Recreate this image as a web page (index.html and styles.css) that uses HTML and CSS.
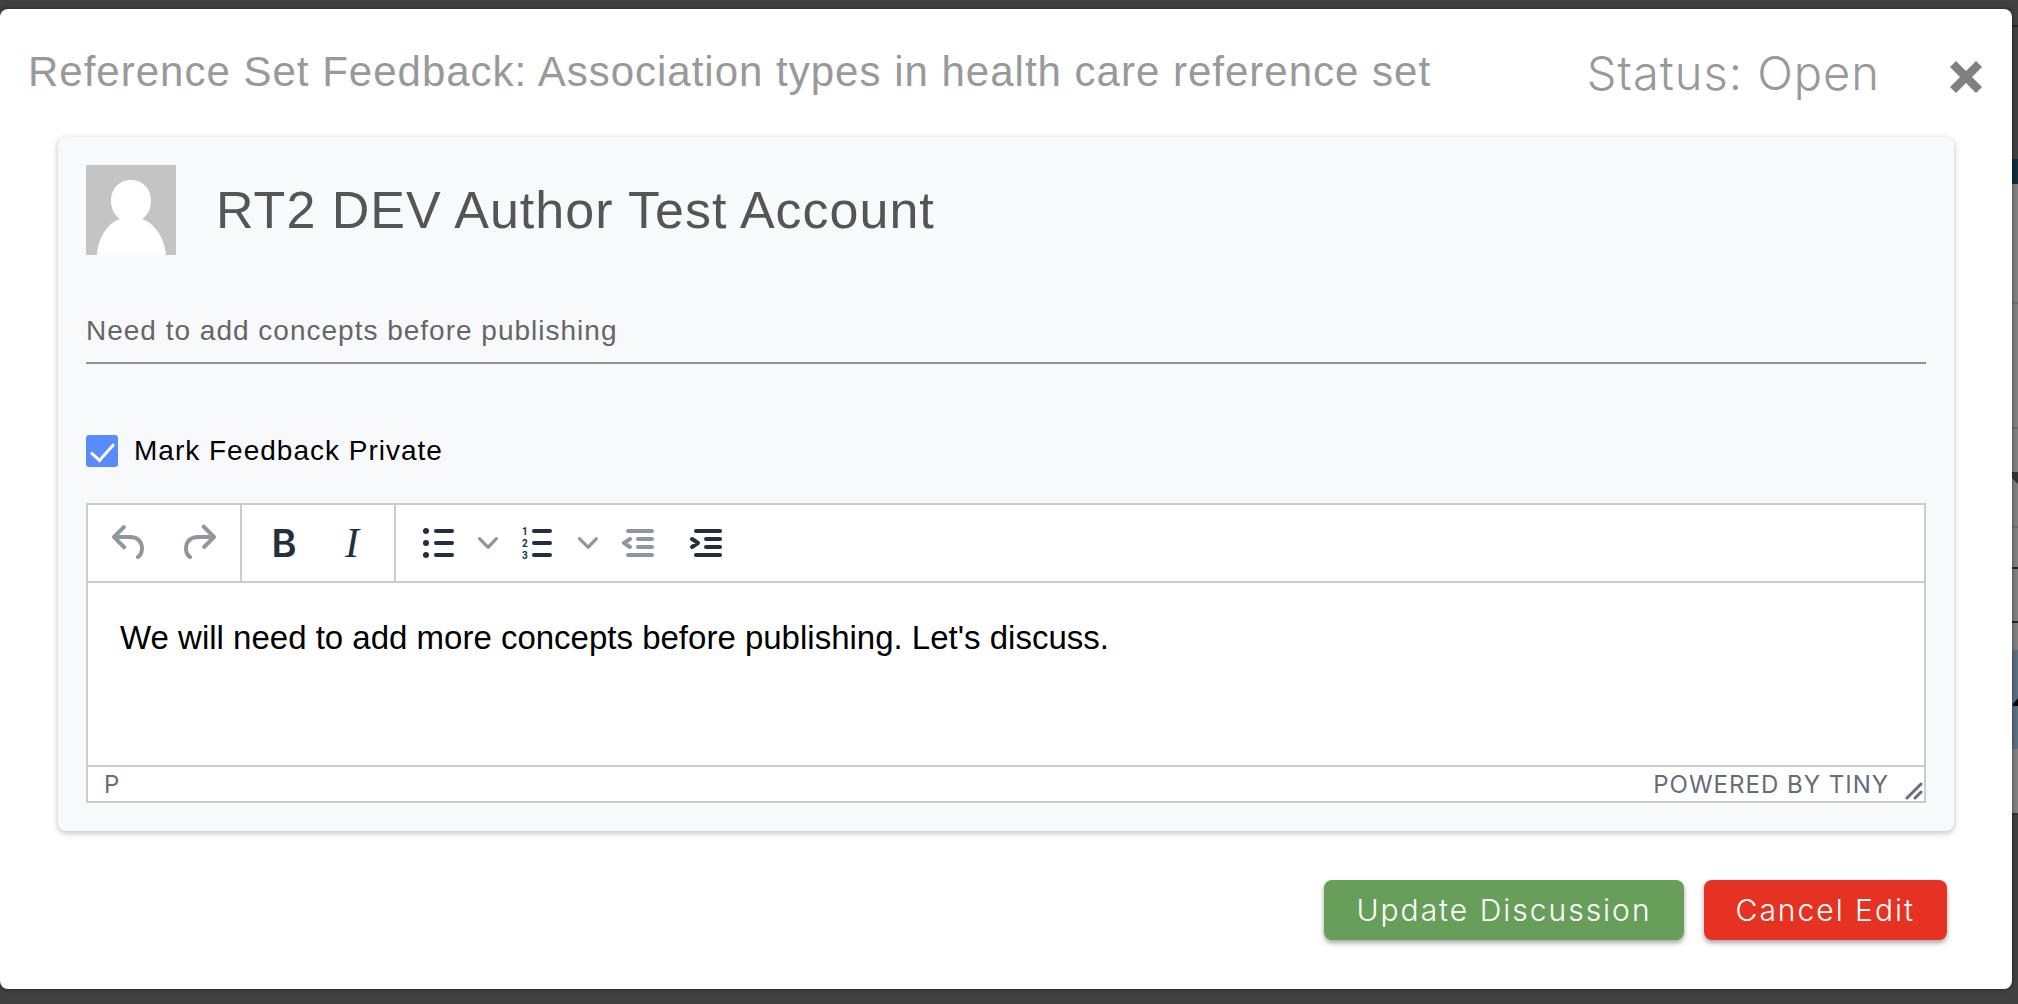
FILE: index.html
```html
<!DOCTYPE html>
<html lang="en">
<head>
  <meta charset="utf-8">
  <title>Reference Set Feedback</title>
  <link rel="stylesheet" href="styles.css">
</head>
<body>

  <!-- dimmed page behind the dialog -->
  <div class="page" aria-hidden="true">
    <div class="page-top"></div>
    <div class="page-nav"></div>
    <div class="page-bar"></div>
    <div class="page-row row-a"></div>
    <div class="page-row row-b"></div>
    <div class="page-row row-c"></div>
    <div class="page-row row-d">
      <svg width="8" height="12" viewBox="0 0 8 12"><path d="M0 0H8V12L2 6H0Z"/></svg>
    </div>
    <div class="page-row row-e"></div>
    <div class="page-row row-f"></div>
    <div class="page-selected">
      <svg width="5" height="8" viewBox="0 0 5 8"><path d="M5 0V8H0V6Z"/></svg>
    </div>
    <div class="page-row row-g"></div>
  </div>

  <div class="modal" role="dialog" aria-labelledby="modal-title">
    <div class="modal-header">
      <h1 class="modal-title" id="modal-title">Reference Set Feedback: Association types in health care reference set</h1>
      <div class="modal-status">Status: Open</div>
      <button class="btn-close" type="button" aria-label="Close">
        <svg width="32" height="32" viewBox="0 0 32 32"><path d="M6 0L16 10L26 0L32 6L22 16L32 26L26 32L16 22L6 32L0 26L10 16L0 6Z"/></svg>
      </button>
    </div>

    <form class="card">
      <div class="author">
        <svg class="avatar" width="90" height="90" viewBox="0 0 90 90">
          <rect width="90" height="90" fill="#c4c4c4"/>
          <path d="M45 15C57 15 65 24 65 36C65 44 61 51 56 54C69 58 79 74 80 90H11C12 74 21 58 34 54C29 51 25 44 25 36C25 24 33 15 45 15Z" fill="#fff"/>
        </svg>
        <h2 class="author-name">RT2 DEV Author Test Account</h2>
      </div>

      <input class="subject" type="text" aria-label="Subject" value="Need to add concepts before publishing">

      <label class="private"><input type="checkbox" checked>Mark Feedback Private</label>

      <div class="editor">
        <div class="toolbar">
          <div class="group">
            <button class="tool" type="button" aria-label="Undo" disabled>
              <svg viewBox="0 0 24 24"><path d="M6.4 8H12c3.7 0 6.2 2 6.8 5.1.6 2.7-.4 5.6-2.3 6.8a1 1 0 0 1-1-1.8c1.1-.6 1.8-2.7 1.4-4.6-.5-2.1-2.1-3.5-4.9-3.5H6.4l3.3 3.3a1 1 0 1 1-1.4 1.4l-5-5a1 1 0 0 1 0-1.4l5-5a1 1 0 0 1 1.4 1.4L6.4 8z"/></svg>
            </button>
            <button class="tool" type="button" aria-label="Redo" disabled>
              <svg viewBox="0 0 24 24"><path d="M17.6 10H12c-2.8 0-4.4 1.4-4.9 3.5-.4 2 .3 4 1.4 4.6a1 1 0 1 1-1 1.8c-2-1.2-2.9-4.1-2.3-6.8.6-3 3-5.1 6.8-5.1h5.6l-3.3-3.3a1 1 0 1 1 1.4-1.4l5 5a1 1 0 0 1 0 1.4l-5 5a1 1 0 0 1-1.4-1.4l3.3-3.3z"/></svg>
            </button>
          </div>
          <div class="group">
            <button class="tool bold" type="button" aria-label="Bold">B</button>
            <button class="tool italic" type="button" aria-label="Italic">I</button>
          </div>
          <div class="group">
            <button class="tool" type="button" aria-label="Bullet list">
              <svg viewBox="0 0 24 24"><circle cx="6" cy="6" r="1.5"/><circle cx="6" cy="12" r="1.5"/><circle cx="6" cy="18" r="1.5"/><path class="line" d="M11 6h8M11 12h8M11 18h8"/></svg>
            </button>
            <button class="tool chevron" type="button" aria-label="Bullet list styles">
              <svg viewBox="0 0 10 10"><path d="M8.7 2.2c.3-.3.8-.3 1 0 .4.4.4.9 0 1.2L5.7 7.8c-.3.3-.9.3-1.2 0L.2 3.4a.8.8 0 0 1 0-1.2c.3-.3.8-.3 1.1 0L5 6l3.7-3.8z"/></svg>
            </button>
            <button class="tool" type="button" aria-label="Numbered list">
              <svg viewBox="0 0 24 24"><text x="4" y="8">1</text><text x="4" y="14">2</text><text x="4" y="20">3</text><path class="line" d="M10 6h8M10 12h8M10 18h8"/></svg>
            </button>
            <button class="tool chevron" type="button" aria-label="Numbered list styles">
              <svg viewBox="0 0 10 10"><path d="M8.7 2.2c.3-.3.8-.3 1 0 .4.4.4.9 0 1.2L5.7 7.8c-.3.3-.9.3-1.2 0L.2 3.4a.8.8 0 0 1 0-1.2c.3-.3.8-.3 1.1 0L5 6l3.7-3.8z"/></svg>
            </button>
            <button class="tool" type="button" aria-label="Decrease indent" disabled>
              <svg viewBox="0 0 24 24"><path class="line" d="M7 6h12M12 10h7M12 14h7M7 18h12M8 10L5 12L8 14"/></svg>
            </button>
            <button class="tool" type="button" aria-label="Increase indent">
              <svg viewBox="0 0 24 24"><path class="line" d="M7 6h12M12 10h7M12 14h7M7 18h12M5 10L8 12L5 14"/></svg>
            </button>
          </div>
        </div>
        <textarea class="editor-text" aria-label="Message">We will need to add more concepts before publishing. Let's discuss.</textarea>
        <div class="statusbar">
          <span>P</span>
          <a class="powered" href="#">POWERED BY TINY</a>
          <svg class="resize" width="18" height="18" viewBox="0 0 18 18"><path d="M2 16L16 2M10 16L16 10"/></svg>
        </div>
      </div>
    </form>

    <div class="modal-footer">
      <button class="btn btn-update" type="button">Update Discussion</button>
      <button class="btn btn-cancel" type="button">Cancel Edit</button>
    </div>
  </div>

</body>
</html>
```
FILE: styles.css
```css
* {
  box-sizing: border-box;
}
body {
  display: grid;
  margin: 0;
  min-height: 100vh;
  background-color: #404040;
  font-family: "Liberation Sans", Arial, sans-serif;
  letter-spacing: 1px;
}
button {
  border: 0;
  padding: 0;
  background: none;
}

/* page behind */
.page,
.modal {
  grid-area: 1 / 1;
}
.page svg {
  display: block;
  margin-left: auto;
}
.page-top {
  height: 27px;
  border-bottom: 2px solid #262626;
}
.page-nav {
  height: 132px;
}
.page-bar {
  height: 25px;
  background-color: #132d3b;
}
.page-row {
  background-color: #808080;
  border-bottom: 2px solid #6e6e6e;
}
.row-a { height: 120px; }
.row-b { height: 125px; }
.row-c {
  height: 43px;
  border-bottom: 0;
}
.row-d {
  height: 56px;
  fill: #333;
}
.row-e {
  height: 41px;
  border-color: #262626;
}
.row-f {
  height: 54px;
  border-color: #262626;
}
.page-selected {
  height: 126px;
  border-top: 27px solid #808080;
  padding-top: 48px;
  background-color: #5a6f80;
}
.row-g {
  height: 66px;
  border-color: #333;
}

/* dialog */
.modal {
  margin: 9px 6px 15px 0;
  border-radius: 8px;
  background-color: #fff;
  box-shadow: 0 0 4px rgba(0, 0, 0, 0.5);
}
.modal-header {
  display: flex;
  align-items: center;
  height: 128px;
  padding: 0 30px 2px 28px;
  color: #999;
}
.modal-title {
  flex: 1;
  margin: 0;
  font-size: 42px;
  font-weight: normal;
}
.modal-status {
  margin-right: 70px;
  font-family: Inter, sans-serif;
  font-size: 47px;
  font-weight: 300;
}
.btn-close {
  padding-top: 10px;
}
.btn-close svg {
  display: block;
  fill: #808080;
}
.card {
  margin: 0 58px;
  padding: 28px;
  border-radius: 8px;
  background-color: #f8f9fb;
  box-shadow: 0 2px 6px rgba(0, 0, 0, 0.25);
}
.author {
  display: flex;
  align-items: center;
  gap: 40px;
}
.author-name {
  margin: 0;
  color: #555;
  font-size: 52px;
  font-weight: normal;
}
.subject {
  display: block;
  width: 100%;
  height: 68px;
  margin: 41px 0 71px;
  border: 0;
  border-bottom: 2px solid #909297;
  padding: 4px 0 0;
  background: none;
  color: #666;
  font-family: inherit;
  font-size: 28px;
  letter-spacing: inherit;
}
.private {
  display: flex;
  align-items: center;
  gap: 16px;
  height: 32px;
  font-size: 28px;
}
.private input {
  appearance: none;
  width: 32px;
  height: 32px;
  margin: 0;
  border-radius: 3px;
  background-color: #5a8bfa;
}
.private input:checked::before {
  content: "";
  display: block;
  width: 10px;
  height: 20px;
  margin: 3px 0 0 10px;
  border: solid #fff;
  border-width: 0 3px 3px 0;
  transform: rotate(42deg);
}

/* editor */
.editor {
  margin-top: 36px;
  border: 2px solid #ccc;
  background-color: #fff;
}
.toolbar {
  display: flex;
  height: 78px;
  border-bottom: 2px solid #ccc;
}
.group {
  display: flex;
  align-items: center;
  padding: 0 8px;
  border-right: 2px solid #ccc;
}
.group:last-child {
  border-right: 0;
}
.tool {
  display: flex;
  align-items: center;
  justify-content: center;
  width: 68px;
  height: 68px;
  color: #222f3e;
}
.tool svg {
  width: 48px;
  height: 48px;
  fill: currentColor;
}
.tool .line {
  fill: none;
  stroke: currentColor;
  stroke-width: 2;
  stroke-linecap: round;
  stroke-linejoin: round;
}
.tool text {
  font: bold 5px Roboto, sans-serif;
  letter-spacing: 0;
}
.tool:disabled svg,
.chevron svg {
  opacity: 0.5;
}
.chevron {
  width: 32px;
}
.chevron svg {
  width: 20px;
  height: 20px;
}
.bold {
  font: 600 38px Inter, sans-serif;
}
.italic {
  font: italic 42px "Liberation Serif", serif;
}
.editor-text {
  display: block;
  width: 100%;
  height: 182px;
  border: 0;
  padding: 32px;
  resize: none;
  color: #000;
  font-family: "Liberation Sans", Arial, sans-serif;
  font-size: 33px;
  line-height: 45px;
}
.statusbar {
  display: flex;
  align-items: center;
  height: 36px;
  border-top: 2px solid #ccc;
  padding-left: 16px;
  color: #646d78;
  font-family: Inter, sans-serif;
  font-size: 24px;
}
.powered {
  margin: 0 16px 0 auto;
  color: inherit;
  text-decoration: none;
}
.resize {
  align-self: flex-end;
  margin: 0 1px 1px 0;
  fill: none;
  stroke: #646d78;
  stroke-width: 3;
  stroke-linecap: round;
}

/* footer */
.modal-footer {
  display: flex;
  justify-content: flex-end;
  gap: 20px;
  padding: 49px 65px;
}
.btn {
  height: 60px;
  padding: 0 32px;
  border-radius: 8px;
  box-shadow: 0 3px 5px rgba(0, 0, 0, 0.35);
  color: #fff;
  font-family: Inter, sans-serif;
  font-size: 30px;
  font-weight: 300;
  letter-spacing: 2px;
}
.btn-update {
  background-color: #679f5a;
}
.btn-cancel {
  background-color: #e53223;
}
```
